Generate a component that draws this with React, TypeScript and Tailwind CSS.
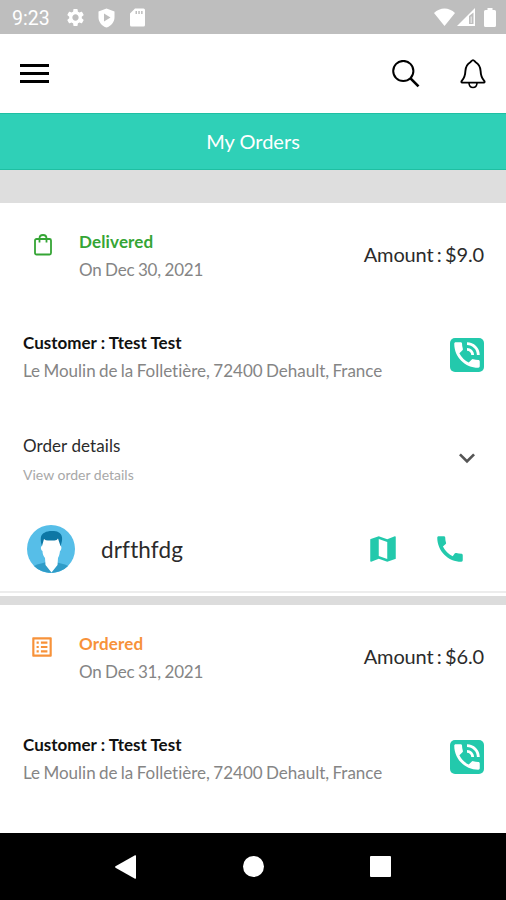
import { MdCall, MdKeyboardArrowDown, MdListAlt, MdMap, MdPhoneInTalk, MdSettings } from 'react-icons/md';

type Order = {
  status: 'Delivered' | 'Ordered';
  date: string;
  amount: string;
  customer: string;
  address: string;
};

const orders: Order[] = [
  {
    status: 'Delivered',
    date: 'Dec 30, 2021',
    amount: '$9.0',
    customer: 'Ttest Test',
    address: 'Le Moulin de la Folletière, 72400 Dehault, France',
  },
  {
    status: 'Ordered',
    date: 'Dec 31, 2021',
    amount: '$6.0',
    customer: 'Ttest Test',
    address: 'Le Moulin de la Folletière, 72400 Dehault, France',
  },
];

function StatusBar() {
  return (
    <div className="flex h-[34px] shrink-0 items-center justify-between bg-[#bebebe] pl-3 pr-[10px] text-white">
      <div className="flex items-center pt-px">
        <span className="w-[53px] pt-[2px] font-[Roboto,sans-serif] text-[19.5px] leading-none">9:23</span>
        <MdSettings className="size-[21px]" />
        <svg className="ml-[12px] h-[20px] w-[17px]" viewBox="0 0 17 20" fill="currentColor">
          <path fillRule="evenodd" d="M8.500 0.500 16.500 3.500V9.500C16.500 14 13 18.200 8.500 19.500 4 18.200 0.500 14 0.500 9.500V3.500ZM6 5.500V13.500L12.500 9.500Z" />
        </svg>
        <svg className="ml-[15px] h-[19px] w-[15px]" viewBox="0 0 15 19" fill="currentColor">
          <path fillRule="evenodd" d="M5 .5H13.500Q15 .5 15 2V17Q15 18.500 13.500 18.500H1.500Q0 18.500 0 17V5.500ZM5.500 3V6H7V3ZM8.300 3V6H9.800V3ZM11.100 3V6H12.600V3Z" />
        </svg>
      </div>
      <div className="flex items-center">
        <svg className="h-[18px] w-[21px]" viewBox="0 0 21 18" fill="currentColor">
          <path d="M0 5C6-1 15-1 21 5L10.500 18Z" />
        </svg>
        <svg className="ml-[2px] h-[18px] w-[18px]" viewBox="0 0 18 18" fill="currentColor">
          <path fillRule="evenodd" d="M18 0V18H0ZM12 8V16H16.500V4.500Z" />
          <path d="M13.500 8.500H15V15H13.500Z" opacity=".5" />
        </svg>
        <svg className="ml-[9px] h-[19px] w-[12px]" viewBox="0 0 12 19" fill="currentColor">
          <path d="M3.500 0H8.500V2H10.500Q12 2 12 3.500V17.500Q12 19 10.500 19H1.500Q0 19 0 17.500V3.500Q0 2 1.500 2H3.500Z" />
        </svg>
      </div>
    </div>
  );
}

function Header() {
  return (
    <header className="flex h-[79px] shrink-0 items-center justify-between bg-white pl-5 pr-[19px] text-black">
      <button className="flex w-[29px] flex-col gap-[5px]" aria-label="Menu">
        <span className="h-[3px] w-full bg-current" />
        <span className="h-[3px] w-full bg-current" />
        <span className="h-[3px] w-full bg-current" />
      </button>
      <div className="flex items-center gap-[40px]">
        <svg className="size-[28px]" viewBox="0 0 28 28" fill="none" stroke="currentColor">
          <circle cx="11.300" cy="11" r="10.100" strokeWidth="2" />
          <path d="M18.500 18.300 26.500 26.300" strokeWidth="2.600" />
        </svg>
        <svg className="h-[30px] w-[27px]" viewBox="0 0 27 30" fill="none" stroke="currentColor" strokeWidth="1.900" strokeLinejoin="round">
          <path d="M13 1.100C12 1.100 11.300 2.300 10.300 3.200 7.200 5 5.600 8 5.400 12 5.200 17 4.500 19 1.800 21.800Q.8 23.600 2.200 23.600H23.800Q25.200 23.600 24.200 21.800C21.500 19 20.800 17 20.600 12 20.400 8 18.800 5 15.700 3.200 14.700 2.300 14 1.100 13 1.100Z" />
          <path d="M9 24C9.300 30 16.700 30 17 24" strokeWidth="1.600" />
        </svg>
      </div>
    </header>
  );
}

function BagIcon() {
  return (
    <svg className="ml-[5px] h-[22px] w-[18px]" viewBox="0 0 18 22" fill="none" stroke="currentColor" strokeWidth="1.800">
      <rect x="1" y="5" width="16" height="15.500" rx="1.500" />
      <path d="M5.500 8.500V4.500C5.500-.2 12.500-.2 12.500 4.500V8.500" />
    </svg>
  );
}

function Avatar() {
  return (
    <svg className="size-[48px]" viewBox="0 0 48 48">
      <circle cx="24" cy="24" r="24" fill="#56bee8" />
      <path d="M7 41C11 38.500 15 38.500 19 37L24 46 29 37C33 38.500 37 38.500 41 41 32 50 16 50 7 41Z" fill="#2f9cc8" />
      <path d="M15 21C13 15 13 9 18 7.500 20 5.500 29 5.500 31 7 36 9 36 15 33.500 21Z" fill="#0d77a5" />
      <path d="M17 14Q18.500 15.500 21 15.500H27.500Q30 15.500 31 13.500L33.500 21C35 21 34.500 25.500 33 26 32.500 30 31.500 32 31 33L30.500 40 24.500 47.500 18.500 40 18 33C16.500 31 15.500 29 15.500 26 13.500 25 13.500 21 15 21Z" fill="#fff" />
    </svg>
  );
}

function OrderCard({ order }: { order: Order }) {
  const delivered = order.status === 'Delivered';

  return (
    <div className="pl-[23px] pr-[22px] pt-[25px]">
      <div className="flex">
        <div className={`w-[56px] pl-[6px] ${delivered ? 'mt-[6px] text-[#35a535]' : 'mt-[4px] text-[#f7923a]'}`}>
          {delivered ? <BagIcon /> : <MdListAlt className="size-[26px]" />}
        </div>
        <div className="flex-1 text-[17px] leading-7">
          <p className={`font-bold tracking-[0.15px] ${delivered ? 'text-[#35a535]' : 'text-[#f7923a]'}`}>{order.status}</p>
          <p className="tracking-[-0.15px] text-[#858585] [word-spacing:-0.8px]">On {order.date}</p>
        </div>
        <p className="mt-[12px] text-[20px] leading-7 tracking-[-0.15px] text-[#2b2b2b] [word-spacing:-1.6px]">
          Amount : {order.amount}
        </p>
      </div>

      <div className="mt-[45px] flex items-center justify-between text-[17px] leading-7">
        <div>
          <p className="font-bold text-[#111]">Customer : {order.customer}</p>
          <p className="text-[#858585] [word-spacing:-1px]">{order.address}</p>
        </div>
        <button className="mb-1 flex size-[34px] items-center justify-center rounded-[5px] bg-[#23c9ac] text-white" aria-label="Call customer">
          <MdPhoneInTalk className="size-[34px]" />
        </button>
      </div>
    </div>
  );
}

export default function App() {
  return (
    <div className="flex h-[900px] w-[506px] flex-col overflow-hidden bg-white font-[Lato,sans-serif] [font-variant-ligatures:none]">
      <StatusBar />
      <Header />
      <h1 className="flex h-[57px] shrink-0 items-center justify-center border-y border-[#1fbfa2] bg-[#2fd0b7] pb-px text-[20px] text-white">
        My Orders
      </h1>

      <main className="min-h-0 flex-1 overflow-hidden">
        <div className="h-[33px] bg-[#dedede]" />
        <section className="h-[388px]">
          <OrderCard order={orders[0]} />

          {/* Expandable details */}
          <div className="mt-[47px] flex items-center justify-between pl-[23px] pr-[23px]">
            <div>
              <p className="text-[17px] leading-7 tracking-[0.08px] text-[#2b2b2b]">Order details</p>
              <p className="text-[14px] leading-[30px] text-[#a8a8a8]">View order details</p>
            </div>
            <MdKeyboardArrowDown className="mb-[7px] size-[32px] text-[#555]" />
          </div>

          {/* Delivery contact */}
          <div className="mt-[35px] flex items-center pl-[27px] pr-[39px]">
            <Avatar />
            <p className="ml-[26px] flex-1 pt-[2px] text-[22.5px] tracking-[0.15px] text-[#2b2b2b]">drfthfdg</p>
            <div className="flex gap-[33px] text-[#23c9ac]">
              <MdMap className="size-[34px]" />
              <MdCall className="size-[34px]" />
            </div>
          </div>
        </section>

        <div className="mb-[3px] h-[2px] bg-[#ececec]" />
        <div className="h-[9px] bg-[#dcdcdc]" />
        <OrderCard order={orders[1]} />
      </main>

      <nav className="flex h-[67px] shrink-0 items-center bg-black pl-[115px] text-white">
        <svg className="h-[24px] w-[21px]" viewBox="0 0 21 24" fill="currentColor">
          <path d="M20 .3Q21 0 21 1V23Q21 24 20 23.700L.5 12.700Q-.3 12 .5 11.300Z" />
        </svg>
        <span className="ml-[107px] size-[21px] rounded-full bg-current" />
        <span className="ml-[106px] size-[21px] rounded-[1px] bg-current" />
      </nav>
    </div>
  );
}
